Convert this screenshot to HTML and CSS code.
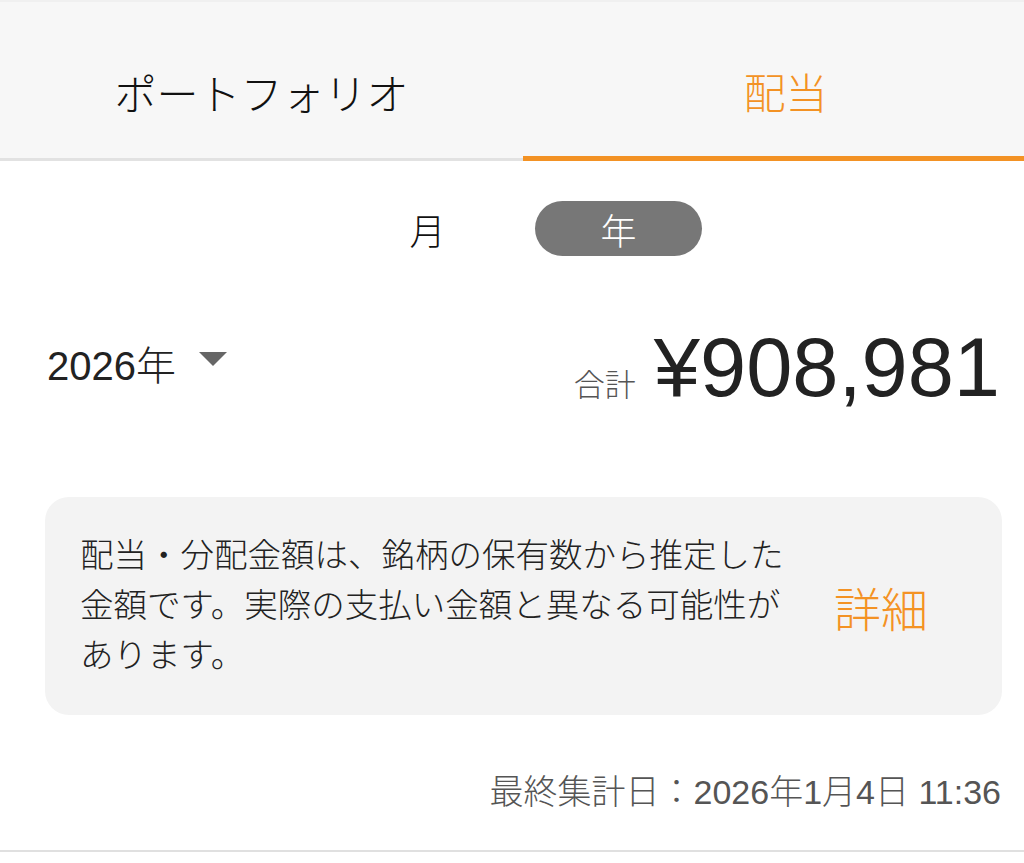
FILE: index.html
```html
<!DOCTYPE html>
<html lang="ja">
<head>
<meta charset="UTF-8" />
<meta name="viewport" content="width=device-width, initial-scale=1" />
<title>配当</title>
<link rel="stylesheet" href="styles.css">
</head>
<body>

<div class="tabs">
  <div class="tab">ポートフォリオ</div>
  <div class="tab active">配当</div>
</div>

<div class="period">
  <div class="period-item">月</div>
  <div class="period-item selected">年</div>
</div>

<div class="summary">
  <div class="year-select">2026年 <span class="caret"></span></div>
  <div class="total">
    <span class="total-label">合計</span>
    <span class="total-value">¥908,981</span>
  </div>
</div>

<div class="notice">
  <p class="notice-text">配当・分配金額は、銘柄の保有数から推定した金額です。実際の支払い金額と異なる可能性があります。</p>
  <a class="notice-link">詳細</a>
</div>

<div class="updated">最終集計日：2026年1月4日 11:36</div>

</body>
</html>
```

FILE: styles.css
```css
body {
  margin: 0;
  background: #fff;
  font-family: 'Liberation Sans', 'Noto Sans CJK JP', sans-serif;
  font-weight: 300;
  color: #222;
  min-height: 852px;
  border-bottom: 2px solid #e0e0e0;
  box-sizing: border-box;
}

/* タブ */
.tabs {
  display: flex;
  background: #f7f7f7;
  border-top: 2px solid #f0f0f0;
  height: 161px;
  box-sizing: border-box;
}
.tab {
  flex: 1;
  display: flex;
  align-items: center;
  justify-content: center;
  font-size: 42px;
  color: #111;
  border-bottom: 3px solid #e2e2e2;
  padding-top: 22px;
}
.tab:first-child {
  flex: 0 0 523px;
}
.tab.active {
  color: #f39224;
  border-bottom: 5px solid #f39224;
  padding-left: 24px;
}

/* 月・年 切替 */
.period {
  display: flex;
  justify-content: center;
  align-items: center;
  gap: 74px;
  margin-top: 40px;
  padding-left: 72px;
}
.period-item {
  width: 67px;
  height: 55px;
  display: flex;
  align-items: center;
  justify-content: center;
  font-size: 36px;
  color: #111;
  border-radius: 28px;
}
.period-item.selected {
  width: 167px;
  background: #777;
  color: #fff;
}

/* 合計 */
.summary {
  display: flex;
  justify-content: space-between;
  align-items: flex-start;
  padding: 0 24px 0 47px;
  margin-top: 70px;
}
.year-select {
  font-size: 40px;
  margin-top: 8px;
  display: flex;
  align-items: center;
}
.caret {
  display: inline-block;
  width: 0;
  height: 0;
  margin-left: 23px;
  margin-top: -8px;
  border-left: 14px solid transparent;
  border-right: 14px solid transparent;
  border-top: 14px solid #666;
}
.total {
  display: flex;
  align-items: baseline;
}
.total-label {
  font-size: 31px;
  color: #555;
  margin-right: 18px;
}
.total-value {
  font-size: 83px;
  line-height: 1;
  color: #222;
}

/* 注意書き */
.notice {
  display: flex;
  align-items: center;
  margin: 88px 22px 0 45px;
  background: #f3f3f3;
  border-radius: 24px;
  padding: 30px 74px 30px 35px;
  height: 218px;
  box-sizing: border-box;
}
.notice-text {
  margin: 0;
  width: 710px;
  font-size: 33.5px;
  line-height: 50px;
  color: #222;
}
.notice-link {
  margin-left: auto;
  font-size: 47px;
  color: #f39224;
}

/* 最終集計日 */
.updated {
  text-align: right;
  padding-right: 23px;
  margin-top: 50px;
  font-size: 34px;
  color: #555;
}
```
